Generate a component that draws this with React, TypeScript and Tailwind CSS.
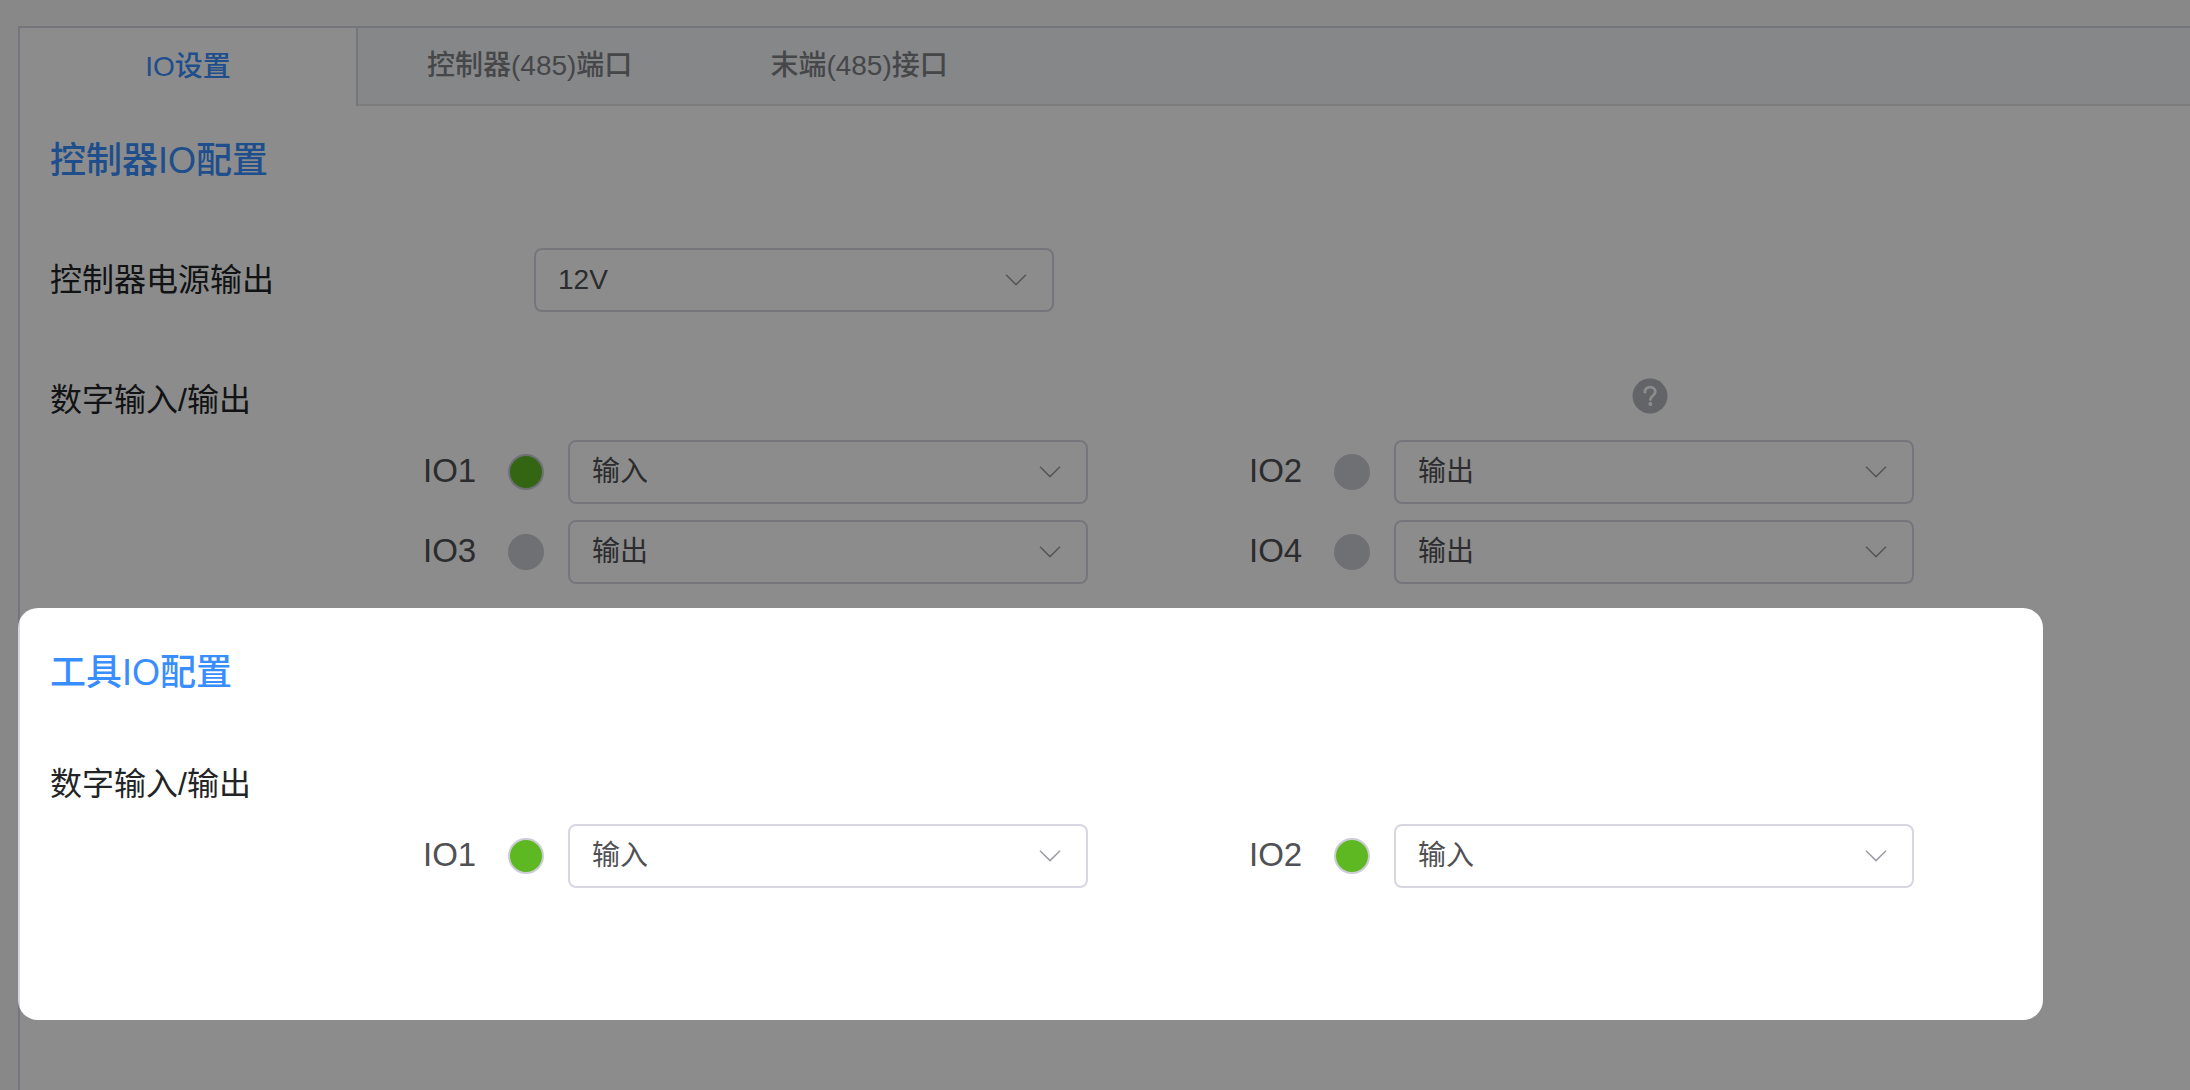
import { useId } from "react";

type Direction = "输入" | "输出";

function Chevron() {
  return (
    <svg
      className="pointer-events-none absolute right-[26px] top-[26px] h-3 w-6"
      viewBox="0 0 24 12"
      fill="none"
      stroke="#9a9da4"
      strokeWidth="1.5"
      aria-hidden="true"
    >
      <path d="M2 0.8 L12 10.6 L22 0.8" />
    </svg>
  );
}

function Select({ id, value, options }: { id: string; value: string; options: string[] }) {
  return (
    <div className="relative w-full max-w-[520px]">
      <select
        id={id}
        defaultValue={value}
        className="block h-16 w-full appearance-none rounded-lg border-2 border-[#d6d7e1] bg-white pl-[22px] pr-16 text-[28px] text-[#505154]"
      >
        {options.map((o) => (
          <option key={o}>{o}</option>
        ))}
      </select>
      <Chevron />
    </div>
  );
}

function IoPort({ name, value, on }: { name: string; value: Direction; on?: boolean }) {
  const id = useId();
  return (
    <div className="flex items-center">
      <label htmlFor={id} className="w-[87px] shrink-0 pb-0.5 pl-0.5 text-[33px] leading-10 text-[#505154]">
        {name}
      </label>
      <span
        className={
          on
            ? "mr-6 size-9 shrink-0 rounded-full border-2 border-[#cbccd6] bg-[#5eb822]"
            : "mr-6 size-9 shrink-0 rounded-full bg-[#cbccd2]"
        }
      />
      <Select id={id} value={value} options={["输入", "输出"]} />
    </div>
  );
}

function SectionTitle({ children }: { children: string }) {
  return <h2 className="text-[36px] font-medium leading-10 text-[#388eff]">{children}</h2>;
}

function HelpIcon() {
  return (
    <svg className="size-9" viewBox="0 0 36 36" aria-hidden="true">
      <circle cx="18" cy="18" r="17.5" fill="#b4b6bc" />
      <path
        d="M12.9 14.2c0-3 2.1-5 5.2-5s5.2 1.9 5.2 4.6c0 3.7-4.9 4.1-4.9 7.8"
        fill="none"
        stroke="#fff"
        strokeWidth="2.8"
        strokeLinecap="round"
      />
      <circle cx="18.3" cy="26" r="2" fill="#fff" />
    </svg>
  );
}

export default function App() {
  return (
    <div className="flex min-h-screen flex-col overflow-hidden bg-[#f7f7fa] pl-[18px] pt-[26px] font-['Liberation_Sans','Noto_Sans_CJK_SC',sans-serif]">
      <main className="flex-1 border-l-2 border-t-2 border-[#d6d7e1] bg-white">
        <div role="tablist" className="flex text-[28px] font-medium leading-9">
          <button
            role="tab"
            aria-selected="true"
            className="h-[78px] w-[338px] border-r-2 border-[#d6d7e1] bg-white text-[#388eff]"
          >
            IO设置
          </button>
          <div className="flex flex-1 border-b-2 border-[#e1e3e8] bg-[#f4f6f9] text-[#7f8186]">
            <button role="tab" aria-selected="false" className="px-[69px]">
              控制器(485)端口
            </button>
            <button role="tab" aria-selected="false" className="px-[69px]">
              末端(485)接口
            </button>
          </div>
        </div>

        <section className="px-[30px] pb-6 pt-[35px]">
          <SectionTitle>控制器IO配置</SectionTitle>
          <div className="mt-[67px] flex items-center">
            <label htmlFor="power" className="w-[484px] text-[32px] leading-10 text-[#222426]">
              控制器电源输出
            </label>
            <Select id="power" value="12V" options={["12V", "24V"]} />
          </div>
          <div className="mt-[66px] flex max-w-[1618px] items-start justify-between">
            <h3 className="text-[32px] leading-[44px] text-[#222426]">数字输入/输出</h3>
            <button aria-label="帮助">
              <HelpIcon />
            </button>
          </div>
          <div className="mt-[18px] grid max-w-[1864px] grid-cols-2 gap-x-[159px] gap-y-4 pl-[371px]">
            <IoPort name="IO1" value="输入" on />
            <IoPort name="IO2" value="输出" />
            <IoPort name="IO3" value="输出" />
            <IoPort name="IO4" value="输出" />
          </div>
        </section>

        <section className="relative px-[30px] pb-[132px] pt-[45px]">
          <SectionTitle>工具IO配置</SectionTitle>
          <h3 className="mt-[69px] text-[32px] leading-[44px] text-[#222426]">数字输入/输出</h3>
          <div className="mt-[18px] grid max-w-[1864px] grid-cols-2 gap-x-[159px] pl-[371px]">
            <IoPort name="IO1" value="输入" on />
            <IoPort name="IO2" value="输入" on />
          </div>
          <div className="pointer-events-none absolute inset-y-0 -left-0.5 right-[147px] rounded-[20px] shadow-[0_0_0_3000px_rgba(0,0,0,0.45)]" />
        </section>
      </main>
    </div>
  );
}
